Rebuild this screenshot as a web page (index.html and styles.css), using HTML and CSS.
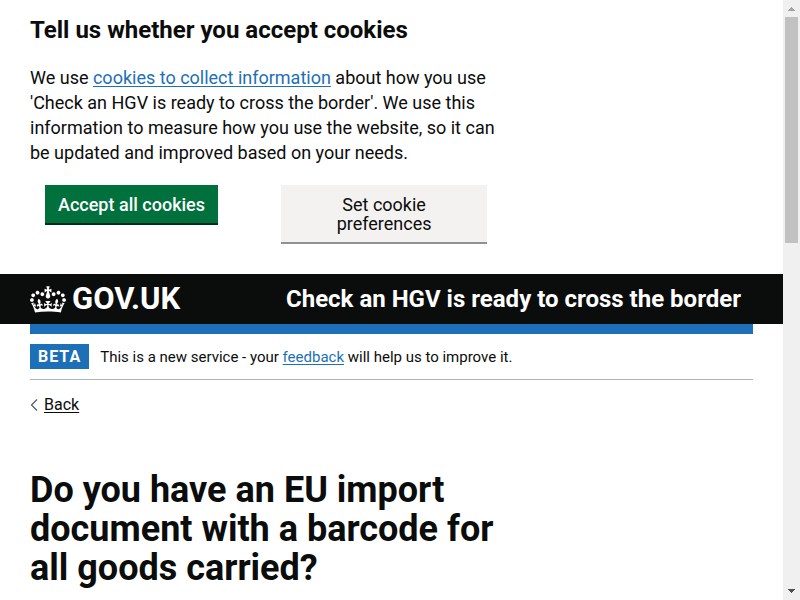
FILE: index.html
```html
<!DOCTYPE html>
<html lang="en">
<head>
<meta charset="utf-8">
<meta name="viewport" content="width=device-width, initial-scale=1">
<title>Do you have an EU import document with a barcode for all goods carried?</title>
<link rel="stylesheet" href="styles.css">
</head>
<body>
<div class="page">
  <section class="cookie-banner container" aria-label="Cookies">
    <div class="two-thirds">
      <h2 class="heading-m">Tell us whether you accept cookies</h2>
      <p class="body-text">We use <a class="link" href="#">cookies to collect information</a> about how you use<br>'Check an HGV is ready to cross the border'. We use this<br>information to measure how you use the website, so it can<br>be updated and improved based on your needs.</p>
      <div class="cookie-actions">
        <div class="action"><button class="button" type="button">Accept all cookies</button></div>
        <div class="action"><button class="button button-secondary" type="button">Set cookie preferences</button></div>
      </div>
    </div>
  </section>
  <header class="header">
    <div class="container header-row">
      <a class="logo" href="#">
        <svg class="crown" viewBox="0 0 132 97" aria-hidden="true"><path fill="currentColor" fill-rule="evenodd" d="M25 30.2c3.5 1.5 7.7-.2 9.1-3.7 1.5-3.6-.2-7.8-3.9-9.2-3.6-1.4-7.6.3-9.1 3.9-1.4 3.5.3 7.5 3.9 9zM9 39.5c3.6 1.5 7.8-.2 9.2-3.7 1.5-3.6-.2-7.8-3.9-9.1-3.6-1.5-7.6.2-9.1 3.8-1.4 3.5.3 7.5 3.8 9zM4.4 57.2c3.5 1.5 7.7-.2 9.1-3.8 1.5-3.6-.2-7.7-3.9-9.1-3.5-1.5-7.6.3-9.1 3.8-1.4 3.5.3 7.6 3.9 9.1zm38.3-21.4c3.5 1.5 7.7-.2 9.1-3.8 1.5-3.6-.2-7.7-3.9-9.1-3.6-1.5-7.6.3-9.1 3.8-1.3 3.6.4 7.7 3.9 9.1zm64.4-5.6c-3.6 1.5-7.8-.2-9.1-3.7-1.5-3.6.2-7.8 3.8-9.2 3.6-1.4 7.7.3 9.2 3.9 1.3 3.5-.4 7.5-3.9 9zm15.9 9.3c-3.6 1.5-7.7-.2-9.1-3.7-1.5-3.6.2-7.8 3.7-9.1 3.6-1.5 7.7.2 9.2 3.8 1.5 3.5-.3 7.5-3.8 9zm4.7 17.7c-3.6 1.5-7.8-.2-9.2-3.8-1.5-3.6.2-7.7 3.9-9.1 3.6-1.5 7.7.3 9.2 3.8 1.3 3.5-.4 7.6-3.9 9.1zM89.3 35.8c-3.6 1.5-7.8-.2-9.2-3.8-1.4-3.6.2-7.7 3.9-9.1 3.6-1.5 7.7.3 9.2 3.8 1.4 3.6-.3 7.7-3.9 9.1zM69.7 17.7l8.9 4.7V9.3l-8.9 2.8c-.2-.3-.5-.6-.9-.9L72.4 0H59.6l3.5 11.2c-.3.3-.6.5-.9.9l-8.8-2.8v13.1l8.8-4.7c.3.3.6.7.9.9l-5 15.4v.1c-.2.8-.4 1.6-.4 2.4 0 4.1 3.1 7.5 7 8.1h.2c.3 0 .7.1 1 .1.4 0 .7 0 1-.1h.2c4-.6 7.1-4.1 7.1-8.1 0-.8-.1-1.7-.4-2.4V34l-5.1-15.4c.4-.2.7-.6 1-.9zM66 92.8c16.9 0 32.8 1.1 47.1 3.2 4-16.9 8.9-26.7 14-33.5l-9.6-3.4c1 4.9 1.1 7.2 0 10.2-1.5-1.4-3-4.3-4.2-8.7L108.6 76c2.8-2 5-3.2 7.5-3.3-4.4 9.4-10 11.9-13.6 11.2-4.3-.8-6.3-4.6-5.6-7.9 1-4.7 5.7-5.9 8-.5 4.3-8.7-3-11.4-7.6-8.8 7.1-7.2 7.9-13.5 2.1-21.1-8 6.1-8.1 12.3-4.5 20.8-4.7-5.4-12.1-2.5-9.5 6.2 3.4-5.2 7.9-2 7.2 3.1-.6 4.3-6.4 7.8-13.5 7.2-10.3-.9-10.9-8-11.2-13.8 2.5-.5 7.1 1.8 11 7.3L80.2 60c-4.1 4.4-8 5.3-12.3 5.4 1.4-4.4 8-11.6 8-11.6H55.5s6.4 7.2 7.9 11.6c-4.2-.1-8-1-12.3-5.4l1.4 16.4c3.9-5.5 8.5-7.7 10.9-7.3-.3 5.8-.9 12.8-11.1 13.8-7.2.6-12.9-2.9-13.5-7.2-.7-5 3.8-8.3 7.1-3.1 2.7-8.7-4.6-11.6-9.4-6.2 3.7-8.5 3.6-14.7-4.6-20.8-5.8 7.6-5 13.9 2.2 21.1-4.7-2.6-11.9.1-7.7 8.8 2.3-5.5 7.1-4.2 8.1.5.7 3.3-1.3 7.1-5.7 7.9-3.5.7-9-1.8-13.5-11.2 2.5.1 4.7 1.3 7.5 3.3l-4.7-15.4c-1.2 4.4-2.7 7.2-4.3 8.7-1.1-3-.9-5.3 0-10.2l-9.5 3.4c5 6.9 9.9 16.7 14 33.5 14.8-2.1 30.8-3.2 47.7-3.2z"/></svg>
        <span>GOV.UK</span>
      </a>
      <a class="service-name" href="#">Check an HGV is ready to cross the border</a>
    </div>
  </header>
  <div class="container">
    <div class="phase-banner">
      <strong class="tag">BETA</strong>
      <span>This is a new service - your <a class="link" href="#">feedback</a> will help us to improve it.</span>
    </div>
    <a class="back" href="#"><svg class="chevron" viewBox="0 0 8 12" aria-hidden="true"><path d="M7 0.5 1.5 6 7 11.5" fill="none" stroke="#505a5f" stroke-width="1.2"/></svg><span class="back-text">Back</span></a>
    <main class="two-thirds">
      <h1 class="heading-xl">Do you have an EU import<br>document with a barcode for<br>all goods carried?</h1>
    </main>
  </div>
</div>
<div class="scrollbar" aria-hidden="true">
  <svg class="arrow" viewBox="0 0 17 17"><path d="M8 7h1v1h1v1h1v1h1v1H5v-1h1V9h1V8h1z" fill="#a3a3a3"/></svg>
  <div class="track"><div class="thumb"></div></div>
  <svg class="arrow" viewBox="0 0 17 17"><path d="M5 6h7v1h-1v1h-1v1H9v1H8V9H7V8H6V7H5z" fill="#505050"/></svg>
</div>
</body>
</html>
```
FILE: styles.css
```css
* { box-sizing: border-box; }

body {
  margin: 0;
  display: flex;
  height: 100vh;
  overflow: hidden;
  background: #fff;
  color: #0b0c0c;
  font-family: Roboto, "Liberation Sans", sans-serif;
}

h1, h2, p { margin: 0; }

.page { flex: 1; min-width: 0; overflow: hidden; }
.container { padding: 0 30px; }
.two-thirds { width: calc(66% - 5px); white-space: nowrap; }

.link { color: #1d70b8; text-underline-offset: 2px; text-decoration-thickness: 1px; }

.cookie-banner { padding-top: 15px; padding-bottom: 30px; }
.heading-m { font-size: 24px; line-height: 30px; font-weight: 700; }
.body-text { margin-top: 20px; font-size: 18px; line-height: 25px; }
.cookie-actions {
  display: grid;
  grid-template-columns: 1fr 1fr;
  margin-top: 20px;
  align-items: start;
}
.action { padding: 0 15px; }
.button {
  display: block;
  border: 0;
  border-bottom: 2px solid #002d18;
  background: #00703c;
  color: #fff;
  padding: 10px 13px 9px;
  font: 500 18px/19px Roboto, "Liberation Sans", sans-serif;
}
.button-secondary {
  width: 100%;
  padding: 10px 40px 9px;
  white-space: normal;
  border-color: #929191;
  background: #f3f2f1;
  color: #0b0c0c;
  font-weight: 400;
}

.header { background: #0b0c0c; color: #fff; }
.header-row { display: flex; align-items: center; height: 50px; }
.header a { color: inherit; text-decoration: none; font-weight: 700; white-space: nowrap; }
.logo { display: flex; align-items: center; gap: 6px; width: 256px; font-size: 31px; line-height: 30px; }
.crown { width: 36px; height: 27px; }
.service-name { font-size: 24px; line-height: 30px; }

.phase-banner {
  display: flex;
  align-items: center;
  gap: 11px;
  border-top: 10px solid #1d70b8;
  border-bottom: 1px solid #b1b4b6;
  padding: 10px 0;
  font-size: 15px;
  line-height: 20px;
}
.tag { background: #1d70b8; color: #fff; padding: 3px 8px 2px; font-size: 16px; letter-spacing: 1px; }
.back {
  display: inline-flex;
  align-items: center;
  gap: 6px;
  margin-top: 15px;
  color: #0b0c0c;
  font-size: 16px;
  line-height: 20px;
  text-decoration: none;
}
.chevron { width: 8px; height: 12px; }
.back-text { text-decoration: underline; text-underline-offset: 2px; }
.heading-xl { margin-top: 56px; font-size: 36px; line-height: 39px; font-weight: 700; }

.scrollbar { display: flex; flex-direction: column; width: 17px; background: #f0f0f0; }
.arrow { width: 17px; height: 17px; }
.track { flex: 1; padding: 0 2px; }
.thumb { height: 40%; background: #c1c1c1; }
```
